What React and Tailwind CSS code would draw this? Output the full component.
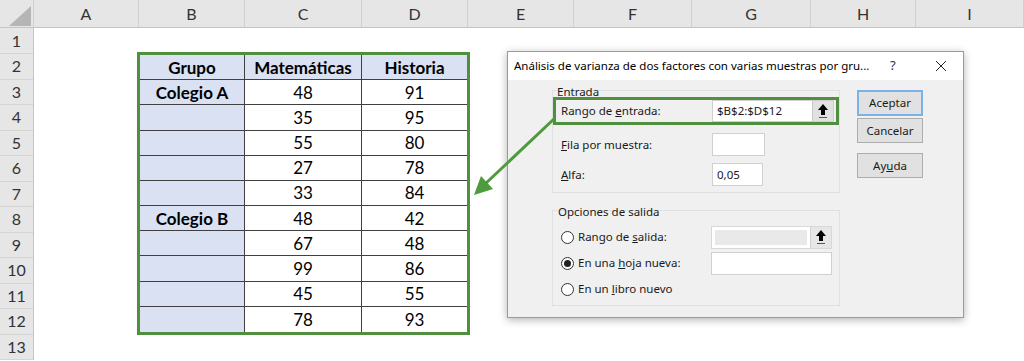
import React from "react";

const columns = [
  { label: "A", w: "w-[105px]" },
  { label: "B", w: "w-[106px]" },
  { label: "C", w: "w-[117px]" },
  { label: "D", w: "w-[106px]" },
  { label: "E", w: "w-[106px]" },
  { label: "F", w: "w-[118px]" },
  { label: "G", w: "w-[119px]" },
  { label: "H", w: "w-[105px]" },
  { label: "I", w: "flex-1" },
];

const rows = [
  { group: "Colegio A", mat: 48, his: 91 },
  { group: "", mat: 35, his: 95 },
  { group: "", mat: 55, his: 80 },
  { group: "", mat: 27, his: 78 },
  { group: "", mat: 33, his: 84 },
  { group: "Colegio B", mat: 48, his: 42 },
  { group: "", mat: 67, his: 48 },
  { group: "", mat: 99, his: 86 },
  { group: "", mat: 45, his: 55 },
  { group: "", mat: 78, his: 93 },
];

function RefButton({ disabled }) {
  return (
    <div
      className={`w-[21px] h-full flex items-center justify-center border-l ${
        disabled ? "bg-[#e6e6e6] border-[#d0d0d0]" : "bg-[#e1e1e1] border-[#c8c8c8]"
      }`}
    >
      <svg width="12" height="16" viewBox="0 0 12 16">
        <path d="M6 1 L11 7 H8 V12 H4 V7 H1 Z" fill="#000" />
        <line x1="2" y1="14.5" x2="10" y2="14.5" stroke="#555" strokeWidth="1" />
      </svg>
    </div>
  );
}

function Radio({ checked }) {
  return (
    <span className="w-[13px] h-[13px] rounded-full border border-[#333] bg-white flex items-center justify-center shrink-0">
      {checked && <span className="w-[7px] h-[7px] rounded-full bg-[#222]" />}
    </span>
  );
}

function Dialog() {
  return (
    <div className="absolute left-[507px] top-[51px] w-[457px] h-[267px] border border-[#9a9a9a] bg-[#f0f0f0] shadow-[0_2px_8px_rgba(0,0,0,0.3)] flex flex-col font-['Noto_Sans',sans-serif] text-[11.5px] text-[#1a1a1a]">
      {/* Title bar */}
      <div className="h-[28px] bg-white flex items-center pl-[6px] shrink-0">
        <span className="w-[376px] text-[11.5px] text-black whitespace-nowrap overflow-hidden">
          Análisis de varianza de dos factores con varias muestras por gru...
        </span>
        <span className="w-[8px] text-[13px] text-[#333]">?</span>
        <svg className="ml-[37px]" width="12" height="12" viewBox="0 0 12 12">
          <path d="M1 1 L11 11 M11 1 L1 11" stroke="#222" strokeWidth="1" />
        </svg>
      </div>

      {/* Body */}
      <div className="flex flex-1 pl-[44px]">
        <div className="w-[288px] flex flex-col">
          {/* Entrada */}
          <div className="mt-[10px] border border-[#e0e0e0] flex flex-col pb-[6px]">
            <div className="-mt-[6px] ml-[4px] leading-[14px]">Entrada</div>
            <div className="-mt-[2px] h-[28px] w-[286px] border-[3px] border-[#4f8f3d] flex items-center pl-[5px] pr-[2px]">
              <span className="w-[151px]">
                Rango de <u>e</u>ntrada:
              </span>
              <div className="flex flex-1 h-[22px] bg-white border border-[#d0d0d0]">
                <span className="flex-1 pl-[4px] leading-[20px]">$B$2:$D$12</span>
                <RefButton />
              </div>
            </div>
            <div className="mt-[8px] h-[23px] flex items-center pl-[8px]">
              <span className="w-[151px]">
                <u>F</u>ila por muestra:
              </span>
              <div className="w-[53px] h-[23px] bg-white border border-[#d0d0d0]" />
            </div>
            <div className="mt-[7px] h-[23px] flex items-center pl-[8px]">
              <span className="w-[151px]">
                <u>A</u>lfa:
              </span>
              <div className="w-[51px] h-[23px] bg-white border border-[#d0d0d0] pl-[4px] leading-[21px]">
                0,05
              </div>
            </div>
          </div>

          {/* Opciones de salida */}
          <div className="mt-[17px] border border-[#e0e0e0] flex flex-col pb-[3px]">
            <div className="-mt-[6px] ml-[5px] leading-[14px]">Opciones de salida</div>
            <div className="mt-[5px] h-[26px] flex items-center pl-[8px]">
              <span className="w-[150px] flex items-center gap-[4px]">
                <Radio />
                <span>
                  Rango de <u>s</u>alida:
                </span>
              </span>
              <div className="flex w-[121px] h-[23px] bg-white border border-[#d8d8d8]">
                <span className="flex-1 m-[3px] bg-[#e9e9e9]" />
                <RefButton disabled />
              </div>
            </div>
            <div className="h-[26px] flex items-center pl-[8px]">
              <span className="w-[150px] flex items-center gap-[4px]">
                <Radio checked />
                <span>
                  En una <u>h</u>oja nueva:
                </span>
              </span>
              <div className="w-[121px] h-[23px] bg-white border border-[#d0d0d0]" />
            </div>
            <div className="h-[26px] flex items-center pl-[8px]">
              <span className="flex items-center gap-[4px]">
                <Radio />
                <span>
                  En un <u>l</u>ibro nuevo
                </span>
              </span>
            </div>
          </div>
        </div>

        {/* Buttons */}
        <div className="ml-[17px] pt-[10px] flex flex-col w-[66px]">
          <button className="h-[26px] bg-[#e1e1e1] border-2 border-[#7ab3e8]">Aceptar</button>
          <button className="mt-[2px] h-[25px] bg-[#e1e1e1] border border-[#adadad]">Cancelar</button>
          <button className="mt-[10px] h-[25px] bg-[#e1e1e1] border border-[#adadad]">
            Ay<u>u</u>da
          </button>
        </div>
      </div>
    </div>
  );
}

export default function App() {
  return (
    <div className="relative w-[1024px] h-[361px] overflow-hidden bg-white font-['Lato',sans-serif] text-black">
      {/* Column headers */}
      <div className="flex h-[28px] bg-[#e6e6e6] border-b border-[#c4c4c4]">
        <div className="w-[34px] border-r border-[#d0d0d0] flex items-end justify-end pr-[2px] pb-[1px]">
          <svg width="22" height="20" viewBox="0 0 22 20">
            <path d="M22 0 L22 20 L0 20 Z" fill="#b5b5b5" />
          </svg>
        </div>
        {columns.map((c) => (
          <div
            key={c.label}
            className={`${c.w} border-r border-[#d0d0d0] flex items-center justify-center text-[16px] text-[#333]`}
          >
            {c.label}
          </div>
        ))}
      </div>

      <div className="flex">
        {/* Row headers */}
        <div className="w-[34px] bg-[#e6e6e6] border-r border-[#c4c4c4] flex flex-col">
          {Array.from({ length: 13 }, (_, i) => (
            <div
              key={i}
              className={`${i === 0 ? "h-[26px]" : "h-[25.5px]"} border-b border-[#d4d4d4] flex items-center justify-center text-[16px] text-[#333]`}
            >
              {i + 1}
            </div>
          ))}
        </div>

        {/* Sheet area */}
        <div className="flex-1 pl-[103px] pt-[24px]">
          <div className="w-[333px] h-[283px] border-[3px] border-[#4f8f3d] grid grid-cols-[105px_117px_1fr] grid-rows-[repeat(11,minmax(0,1fr))] text-[17px] leading-none">
            <div className="bg-[#d9e1f2] border-r border-b border-[#404040] flex items-center justify-center font-bold">Grupo</div>
            <div className="bg-[#d9e1f2] border-r border-b border-[#404040] flex items-center justify-center font-bold">Matemáticas</div>
            <div className="bg-[#d9e1f2] border-b border-[#404040] flex items-center justify-center font-bold">Historia</div>
            {rows.map((r, i) => (
              <React.Fragment key={i}>
                <div
                  className={`bg-[#d9e1f2] border-r border-[#404040] ${i < rows.length - 1 ? "border-b" : ""} flex items-center justify-center font-bold`}
                >
                  {r.group}
                </div>
                <div
                  className={`border-r border-[#404040] ${i < rows.length - 1 ? "border-b" : ""} flex items-center justify-center`}
                >
                  {r.mat}
                </div>
                <div
                  className={`border-[#404040] ${i < rows.length - 1 ? "border-b" : ""} flex items-center justify-center`}
                >
                  {r.his}
                </div>
              </React.Fragment>
            ))}
          </div>
        </div>
      </div>

      <Dialog />

      {/* Green arrow */}
      <svg className="absolute left-0 top-0 pointer-events-none" width="1024" height="361">
        <line x1="555" y1="118" x2="484" y2="185" stroke="#4f9a3c" strokeWidth="3" />
        <polygon points="474,195 493,189 481,176" fill="#4f9a3c" />
      </svg>
    </div>
  );
}
